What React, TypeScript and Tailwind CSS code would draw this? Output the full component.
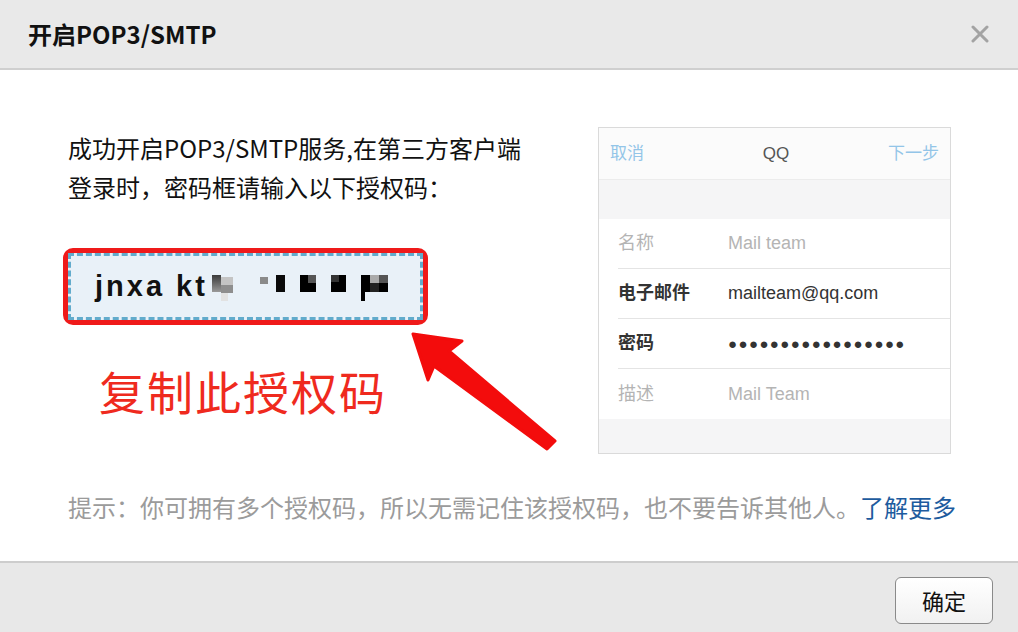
import { ReactNode } from "react";

const cjk = "font-['Liberation_Sans','Noto_Sans_CJK_SC',sans-serif]";

// 手机客户端示意图中的一行
function PhoneRow(props: { label: string; children: ReactNode; dark?: boolean; last?: boolean }) {
  return (
    <div className="flex h-[50px] items-center bg-white pl-[19px]">
      <div
        className={`flex h-full flex-1 items-center ${props.last ? "" : "border-b border-[#e4e4e4]"}`}
      >
        <div className={`w-[110px] text-[18px] ${props.dark ? "font-semibold text-[#333]" : "text-[#b4b4b4]"}`}>
          {props.label}
        </div>
        <div className={`text-[18px] ${props.dark ? "text-[#333]" : "text-[#b4b4b4]"}`}>{props.children}</div>
      </div>
    </div>
  );
}

function Mosaic() {
  return (
    <div className="ml-[4px] flex items-start pt-[3px]">
      <span className="h-[17px] w-[9px] bg-gradient-to-b from-[#3c3c3c] to-[#9a9a9a]" />
      <span className="mt-[2px] flex h-[24px] w-[12px] flex-col">
        <span className="h-[8px] bg-[#c4c4c4]" />
        <span className="h-[8px] bg-[#8e8e8e]" />
        <span className="h-[8px] w-[7px] bg-[#e2e2e2]" />
      </span>
      <span className="ml-[27px] mt-[2px] h-[7px] w-[8px] bg-[#8a8a8a]" />
      <span className="ml-[8px] h-[17px] w-[9px] bg-[#0a0a0a]" />
      <span className="ml-[15px] flex h-[17px] w-[16px]">
        <span className="h-full w-[8px] bg-black" />
        <span className="flex h-full w-[8px] flex-col">
          <span className="h-[8px] bg-[#555]" />
          <span className="h-[9px] bg-black" />
        </span>
      </span>
      <span className="ml-[15px] flex h-[17px] w-[15px]">
        <span className="flex h-full w-[8px] flex-col">
          <span className="h-[7px] bg-[#333]" />
          <span className="h-[10px] bg-black" />
        </span>
        <span className="h-full w-[7px] bg-black" />
      </span>
      <span className="ml-[15px] flex h-[26px] w-[27px]">
        <span className="flex h-full w-[9px] flex-col">
          <span className="h-[17px] bg-black" />
          <span className="h-[9px] w-[4px] bg-black" />
        </span>
        <span className="flex h-[17px] w-[9px] flex-col">
          <span className="h-[8px] bg-[#aaa]" />
          <span className="h-[9px] bg-[#222]" />
        </span>
        <span className="flex h-[17px] w-[9px] flex-col">
          <span className="h-[8px] bg-[#555]" />
          <span className="h-[9px] bg-black" />
        </span>
      </span>
    </div>
  );
}

export default function App() {
  return (
    <div className={`relative h-[632px] w-[1018px] overflow-hidden bg-white ${cjk}`}>
      {/* 标题栏 */}
      <div className="flex h-[70px] items-center justify-between border-b-2 border-[#cfcfcf] bg-[#e9e9e9] pl-[28px] pr-[29px]">
        <div className="text-[24px] font-bold text-[#111] font-['Noto_Sans_CJK_SC',sans-serif]">开启POP3/SMTP</div>
        <svg width="18" height="18" viewBox="0 0 18 18" className="text-[#a3a3a3]">
          <path d="M2 2 L16 16 M16 2 L2 16" stroke="currentColor" strokeWidth="3" strokeLinecap="round" />
        </svg>
      </div>

      {/* 内容 */}
      <div className="flex h-[491px] flex-col pl-[68px] pr-[40px] pt-[58px]">
        <div className="mr-[27px] flex items-start justify-between">
          <div className="flex flex-col">
            <div className="text-[24px] leading-[39px] text-[#111] font-['Noto_Sans_CJK_SC',sans-serif]">
              <div>成功开启POP3/SMTP服务,在第三方客户端</div>
              <div>登录时，密码框请输入以下授权码：</div>
            </div>

            <div className="ml-[-5px] mt-[42px] h-[77px] w-[365px] rounded-[10px] border-[5px] border-[#ef1a1a]">
              <div className="flex h-full items-center border-[3px] border-dashed border-[#62abcc] bg-[#e9f1f8] pl-[24px]">
                <span className="font-['Liberation_Sans',sans-serif] text-[29px] font-bold tracking-[3px] text-[#111]">
                  jnxa kt
                </span>
                <Mosaic />
              </div>
            </div>

            <div className="ml-[31px] mt-[40px] text-[46px] leading-[50px] tracking-[2px] text-[#ef2a1e] font-['Noto_Sans_CJK_SC',sans-serif]">
              复制此授权码
            </div>
          </div>

          {/* 客户端示意 */}
          <div className="mt-[-1px] flex h-[327px] w-[353px] flex-col border border-[#dadada] bg-[#f5f5f6]">
            <div className="flex h-[52px] items-center justify-between border-b border-[#ececec] bg-[#fbfbfb] px-[11px] text-[17px]">
              <span className="text-[#93c5e8]">取消</span>
              <span className="ml-[20px] text-[#555]">QQ</span>
              <span className="text-[#93c5e8]">下一步</span>
            </div>
            <div className="h-[39px]" />
            <PhoneRow label="名称">Mail team</PhoneRow>
            <PhoneRow label="电子邮件" dark>
              mailteam@qq.com
            </PhoneRow>
            <PhoneRow label="密码" dark>
              <span className="text-[15px] tracking-[1.4px]">●●●●●●●●●●●●●●●●●</span>
            </PhoneRow>
            <PhoneRow label="描述" last>
              Mail Team
            </PhoneRow>
          </div>
        </div>

        <div className="mt-[38px] whitespace-nowrap text-[24px] leading-[30px] text-[#9b9b9b] font-['Noto_Sans_CJK_SC',sans-serif]">
          提示：你可拥有多个授权码，所以无需记住该授权码，也不要告诉其他人。
          <span className="text-[#1d5b9e]">了解更多</span>
        </div>
      </div>

      {/* 底部 */}
      <div className="flex h-[71px] items-start justify-end border-t-2 border-[#cdcdcd] bg-[#e8e8e8] pr-[25px] pt-[14px]">
        <button className="flex h-[47px] w-[98px] items-center justify-center rounded-[6px] border-[1.5px] border-[#8a8a8a] bg-gradient-to-b from-white to-[#f1f1f1] text-[22px] text-[#111] font-['Noto_Sans_CJK_SC',sans-serif]">
          确定
        </button>
      </div>

      {/* 箭头标注 */}
      <svg className="pointer-events-none absolute left-0 top-0" width="1018" height="632" viewBox="0 0 1018 632">
        <polygon
          points="413,334 462,341 449,351 555,441 547,449 434,366 428,380"
          fill="#f30c0c"
          stroke="#f30c0c"
          strokeWidth="3"
          strokeLinejoin="round"
        />
      </svg>
    </div>
  );
}
